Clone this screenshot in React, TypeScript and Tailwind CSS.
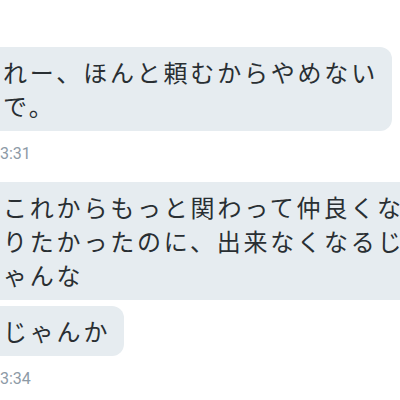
const FONT = "font-['Hiragino_Sans','Noto_Sans_CJK_JP',sans-serif]";

type Msg = { lines: string[]; time?: string; gap: string };

const MESSAGES: Msg[] = [
  { lines: ["れー、ほんと頼むからやめない", "で。"], time: "3:31", gap: "mt-0" },
  {
    lines: ["これからもっと関わって仲良くな", "りたかったのに、出来なくなるじ", "ゃんな"],
    gap: "mt-[18px]",
  },
  { lines: ["じゃんか"], time: "3:34", gap: "mt-[6px]" },
];

function Bubble({ lines }: { lines: string[] }) {
  return (
    <div
      className={`ml-[-11px] self-start whitespace-nowrap rounded-[12px] bg-[#e6ecf0] py-[8px] pl-[14px] pr-[14px] text-[24px] leading-[34px] tracking-[2.8px] text-[#292f33] ${FONT}`}
    >
      {lines.map((line, i) => (
        <div key={i}>{line}</div>
      ))}
    </div>
  );
}

export default function App() {
  return (
    <div className="h-[400px] w-[400px] overflow-hidden bg-white">
      <div className="flex flex-col pt-[47px]">
        {MESSAGES.map((m, i) => (
          <div key={i} className={`flex flex-col ${m.gap}`}>
            <Bubble lines={m.lines} />
            {m.time && (
              <div className="mt-[13px] text-[16px] leading-[20px] text-[#8d9aa6] font-['Roboto','Liberation_Sans',sans-serif]">
                {m.time}
              </div>
            )}
          </div>
        ))}
      </div>
    </div>
  );
}
